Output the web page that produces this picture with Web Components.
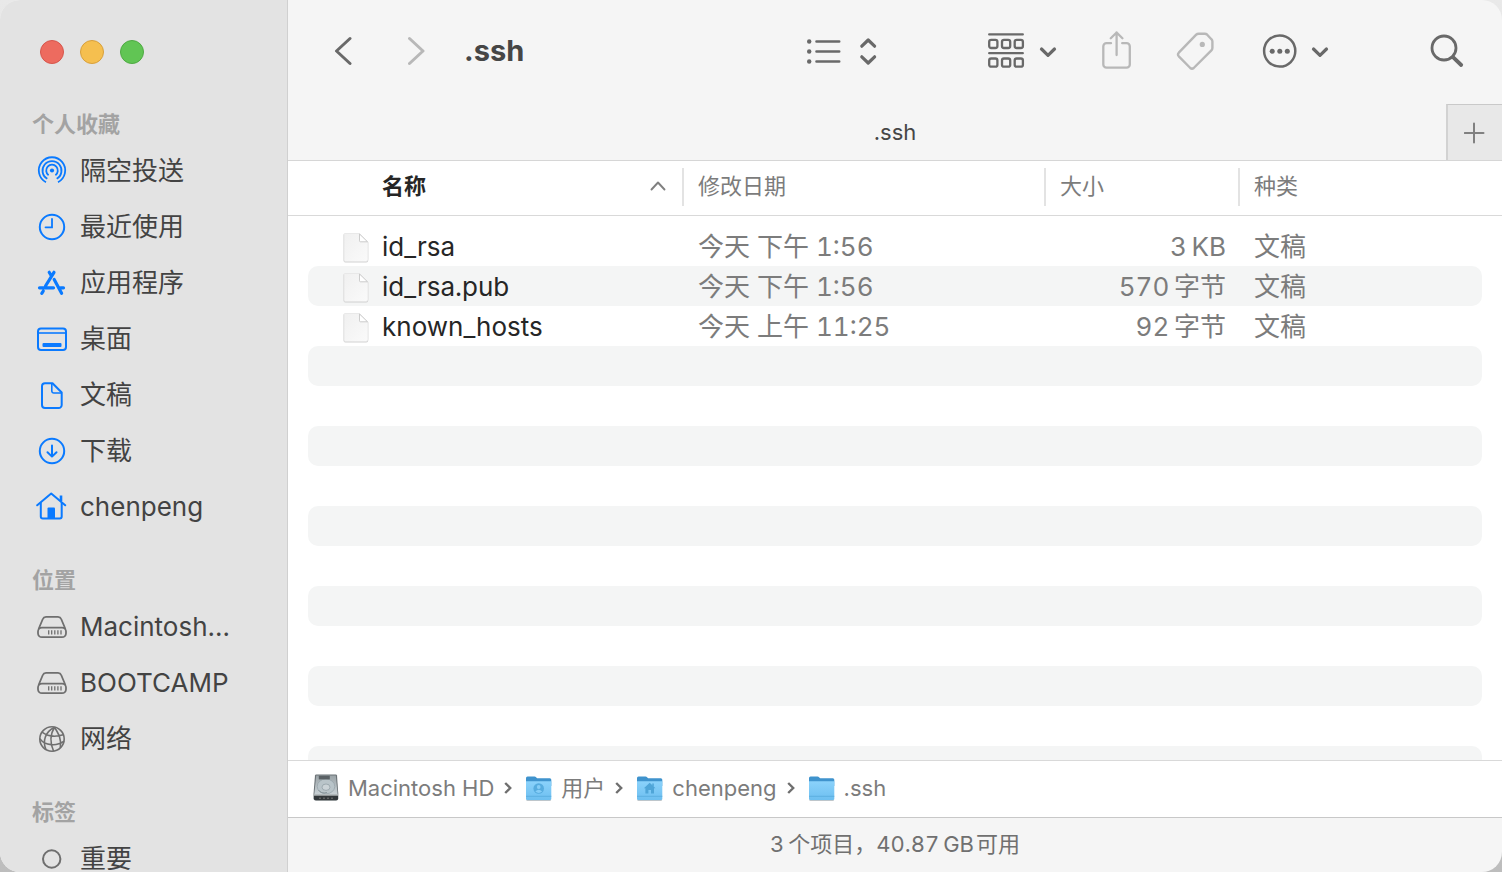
<!DOCTYPE html>
<html lang="zh-CN">
<head>
<meta charset="utf-8">
<title>.ssh</title>
<style>
  html, body { margin: 0; height: 100%; }
  body {
    background: linear-gradient(#e9e9e9, #bdbdbd);
    font-family: Inter, "Noto Sans CJK SC", sans-serif;
    color: #434343;
    overflow: hidden;
  }
</style>
</head>
<body>
<finder-window></finder-window>

<script>
const ICONS = {
  airdrop: `<svg width="32" height="32" viewBox="0 0 32 32" fill="none" stroke="currentColor" stroke-width="1.8"><circle cx="16" cy="15.500" r="2.100" fill="currentColor" stroke="none"/><path d="M12.600 20.200a5.800 5.800 0 1 1 6.800 0M11.300 23.800a9.500 9.500 0 1 1 9.400 0M10 27.200a13.200 13.200 0 1 1 12 0"/></svg>`,
  recent: `<svg width="32" height="32" viewBox="0 0 32 32" fill="none" stroke="currentColor" stroke-width="2"><circle cx="16" cy="16" r="12.200"/><path stroke-width="1.800" stroke-linecap="round" d="M16 8v8.300H9.500"/></svg>`,
  apps: `<svg width="32" height="32" viewBox="0 0 32 32" fill="none" stroke="currentColor" stroke-width="3.2" stroke-linecap="round"><path d="M3.500 20.800H17.500M24.500 20.800H27.500M18 5.300 9.500 19M7.300 24l-1.500 2.300M13.200 5.300l1.800 3M18.200 12.500l7.400 13.800"/></svg>`,
  desktop: `<svg width="32" height="32" viewBox="0 0 32 32" fill="none" stroke="currentColor" stroke-width="2"><rect x="2" y="5.500" width="28" height="21.500" rx="3"/><path d="M2 10h28" stroke-width="1.600"/><rect x="6.500" y="20" width="19" height="4" rx="1" fill="currentColor" stroke="none"/></svg>`,
  doc: `<svg width="32" height="32" viewBox="0 0 32 32" fill="none" stroke="currentColor" stroke-width="2" stroke-linejoin="round"><path d="M9 4.200h7.500l9.200 9.300v12.500a3 3 0 0 1-3 3H9a3 3 0 0 1-3-3V7.200a3 3 0 0 1 3-3Z"/><path stroke-width="1.600" d="M15.800 4.500V12a2 2 0 0 0 2 2h7.700"/></svg>`,
  download: `<svg width="32" height="32" viewBox="0 0 32 32" fill="none" stroke="currentColor" stroke-width="2" stroke-linecap="round" stroke-linejoin="round"><circle cx="16" cy="16" r="12.200"/><path d="M16 10.500v11M11.500 17.200l4.500 4.400 4.500-4.400"/></svg>`,
  home: `<svg width="32" height="32" viewBox="0 0 32 32" fill="none" stroke="currentColor" stroke-width="2" stroke-linecap="round" stroke-linejoin="round"><path d="M1.200 14.300 15.200 2.500 29.200 14.300"/><path d="M4.800 12v13.500a2 2 0 0 0 2 2h16.900a2 2 0 0 0 2-2V12"/><path d="M25 4.500v5.500" stroke-width="2.600" stroke-linecap="butt"/><path d="M11.500 27.500V17.500a1 1 0 0 1 1-1h5.500a1 1 0 0 1 1 1v10Z" fill="currentColor" stroke="none"/></svg>`,
  drive: `<svg width="32" height="32" viewBox="0 0 32 32" fill="none" stroke="currentColor" stroke-width="1.800"><rect x="2" y="16.600" width="28" height="9.600" rx="4"/><path d="M2.600 18 6.800 8Q7.600 5.900 10 5.900H22Q24.400 5.900 25.200 8L29.400 18"/><path stroke-width="1.300" d="M12.700 19.200v4.200M15.700 19.200v4.200M18.800 19.200v4.200M21.900 19.200v4.200M25 19.200v4.200"/></svg>`,
  network: `<svg width="32" height="32" viewBox="0 0 32 32" fill="none" stroke="currentColor" stroke-width="1.600"><circle cx="16" cy="16" r="12.200"/><path d="M18.500 4.200C9 9 6.500 18 9.800 26.200M18.500 4.200C13.500 12 14.500 21 17.600 28.200M18.500 4.200C22.800 11 25.800 16.500 24.300 24.800M6 9.200C12 13.600 20 14 27.300 11.800M3.800 15.600C9 22.800 20.500 23.700 28 18.200"/></svg>`,
  tagdot: `<svg width="32" height="32" viewBox="0 0 32 32" fill="none" stroke="currentColor" stroke-width="2"><circle cx="15.700" cy="16" r="8.700"/></svg>`,

  back: `<svg width="18" height="30" viewBox="0 0 18 30" fill="none" stroke="currentColor" stroke-width="3" stroke-linecap="round" stroke-linejoin="round"><path d="M16 2.500 2.500 15 16 27.500"/></svg>`,
  forward: `<svg width="18" height="30" viewBox="0 0 18 30" fill="none" stroke="currentColor" stroke-width="3" stroke-linecap="round" stroke-linejoin="round"><path d="M1.500 2.500 15 15 1.500 27.500"/></svg>`,
  view: `<svg width="72" height="30" viewBox="0 0 72 30" fill="none" stroke="currentColor" stroke-width="2.600" stroke-linecap="round" stroke-linejoin="round"><g fill="currentColor" stroke="none"><circle cx="3.200" cy="5.500" r="2.200"/><circle cx="3.200" cy="15.500" r="2.200"/><circle cx="3.200" cy="25.500" r="2.200"/></g><path d="M10.500 5.500H33.200M10.500 15.500H33.200M10.500 25.500H33.200"/><path stroke-width="3.200" d="M55.800 10.200l6.400-6.200 6.400 6.200M55.800 20.800l6.400 6.200 6.400-6.200"/></svg>`,
  group: `<svg width="70" height="36" viewBox="0 0 70 36" fill="none" stroke="currentColor" stroke-width="2.300" stroke-linecap="round" stroke-linejoin="round"><path d="M1.200 1.400H34.800M1.200 20.200H34.800"/><rect x="1.200" y="6.800" width="8.200" height="8.200" rx="2"/><rect x="14" y="6.800" width="8.200" height="8.200" rx="2"/><rect x="26.700" y="6.800" width="8.200" height="8.200" rx="2"/><rect x="1.200" y="25.500" width="8.200" height="8.200" rx="2"/><rect x="14" y="25.500" width="8.200" height="8.200" rx="2"/><rect x="26.700" y="25.500" width="8.200" height="8.200" rx="2"/><path stroke-width="3.200" d="M53.500 16 60 22.300 66.500 16"/></svg>`,
  share: `<svg width="32" height="40" viewBox="0 0 32 40" fill="none" stroke="currentColor" stroke-width="2.300" stroke-linecap="round" stroke-linejoin="round"><path d="M10 12.200H5.500a3.200 3.200 0 0 0-3.200 3.200V33.400a3.200 3.200 0 0 0 3.200 3.200H25.600a3.200 3.200 0 0 0 3.200-3.200V15.400a3.200 3.200 0 0 0-3.200-3.200H21.200"/><path d="M15.600 24V1.500M9.800 7.300l5.800-5.800 5.800 5.800"/></svg>`,
  tag: `<svg width="38" height="40" viewBox="0 0 38 40" fill="none" stroke="currentColor" stroke-width="2.400" stroke-linejoin="round"><path d="M20.200 3.700Q21.200 2.700 22.700 2.700H28.800Q30.200 2.700 31.200 3.700L35.400 8.200Q36.400 9.200 36.400 10.600V17Q36.400 18.400 35.400 19.400L17.700 37Q16 38.500 14.300 37L2.800 25.300Q1.200 23.500 2.800 21.700Z"/><circle cx="26.300" cy="13.400" r="2.600" fill="currentColor" stroke="none"/></svg>`,
  more: `<svg width="68" height="36" viewBox="0 0 68 36" fill="none" stroke="currentColor" stroke-width="2.500" stroke-linecap="round" stroke-linejoin="round"><circle cx="17.700" cy="18" r="15.600"/><g fill="currentColor" stroke="none"><circle cx="10.200" cy="18.200" r="2.500"/><circle cx="17.800" cy="18.200" r="2.500"/><circle cx="25.300" cy="18.200" r="2.500"/></g><path stroke-width="3.200" d="M51.500 16 58 22.300 64.500 16"/></svg>`,
  search: `<svg width="34" height="34" viewBox="0 0 34 34" fill="none" stroke="currentColor" stroke-linecap="round"><circle cx="14" cy="14" r="12" stroke-width="2.800"/><path d="M23 23.200 31.200 31" stroke-width="3.800"/></svg>`,
  plus: `<svg width="22" height="22" viewBox="0 0 22 22" fill="none" stroke="currentColor" stroke-width="2" stroke-linecap="round"><path d="M10 1.500V20.500M.8 11H19.500"/></svg>`,
  sort: `<svg width="16" height="10" viewBox="0 0 16 10" fill="none" stroke="currentColor" stroke-width="1.900" stroke-linecap="round" stroke-linejoin="round"><path d="M1.500 8.500 8 1.500 14.500 8.500"/></svg>`,
  crumb: `<svg width="8" height="14" viewBox="0 0 8 14" fill="none" stroke="currentColor" stroke-width="2.400"><path d="M1.200 2 6.200 7 1.200 12"/></svg>`,
  file: `<svg width="28" height="32" viewBox="0 0 28 32"><defs><linearGradient id="p" x1="0" y1="0" x2="1" y2="1"><stop offset="0" stop-color="#f0f0f0"/><stop offset="1" stop-color="#fafafa"/></linearGradient></defs><path d="M2.500 3H17.800L26.200 11.400V29.500a2 2 0 0 1-2 2H3.500a2 2 0 0 1-2-2V4a1 1 0 0 1 1-1Z" fill="#c4c4c4" opacity=".8"/><path d="M2.500 2.500H17.500L26 11V28.500a2 2 0 0 1-2 2H3.500a1.500 1.500 0 0 1-1.500-1.500V3.500a1 1 0 0 1 .5-1Z" fill="url(#p)" stroke="#e4e4e4" stroke-width=".8"/><path d="M17.500 3V9.800a1 1 0 0 0 1 1H25.500Z" fill="#fff" stroke="#c6c6c6" stroke-width=".9"/></svg>`,
  hd: `<svg width="28" height="28" viewBox="0 0 28 28"><defs><linearGradient id="m" x1="0" y1="0" x2="0" y2="1"><stop offset="0" stop-color="#9aa3a7"/><stop offset="1" stop-color="#c9d1d5"/></linearGradient></defs><path d="M3 1.500Q3.200.6 4.200.6H23.800Q24.800.6 25 1.500L26.300 20V24.500a2 2 0 0 1-2 2H3.500a2 2 0 0 1-2-2V20Z" fill="#6b7276"/><path d="M4.200 1.500H23.800L25.600 20.500H2.300Z" fill="url(#m)"/><ellipse cx="14" cy="12.400" rx="8.800" ry="7.400" fill="#b9c4c9" stroke="#98a5ab" stroke-width=".8"/><ellipse cx="14" cy="13.200" rx="4" ry="3.200" fill="#cbd3d7" stroke="#8d9aa0" stroke-width=".7"/><path d="M6.500 16Q9 20 15 18.500" fill="none" stroke="#7f8c92" stroke-width=".8"/><rect x="6.800" y="1.800" width="11" height="3.600" fill="#5a6165"/><path d="M2 20.800H26V24.400a1.800 1.800 0 0 1-1.800 1.800H3.800A1.800 1.800 0 0 1 2 24.400Z" fill="#33383b"/><path d="M2 21H26" stroke="#e7ebed"/><path d="M7 24.200H21" stroke="#777" stroke-dasharray="2 2"/></svg>`
};
const folder = mark => `<svg width="28" height="28" viewBox="0 0 28 28"><defs><linearGradient id="f" x1="0" y1="0" x2="0" y2="1"><stop offset="0" stop-color="#8bd2fb"/><stop offset="1" stop-color="#6dbff0"/></linearGradient></defs><path d="M1 4a1.500 1.500 0 0 1 1.500-1.500H9.500Q10.500 2.500 11.300 3.400T13.500 4.300H24.800A1.500 1.500 0 0 1 26.300 5.800V12H1Z" fill="#3f93cd"/><path d="M1 25.500a1.500 1.500 0 0 0 1.500 1.300H24.800a1.500 1.500 0 0 0 1.500-1.300Z" fill="#a9b4ba"/><path d="M1 7.200H26.300V24.500a1.500 1.500 0 0 1-1.500 1.500H2.500A1.500 1.500 0 0 1 1 24.500Z" fill="url(#f)"/><path d="M1 22.300H26.300" stroke="#5aaede" stroke-width=".9"/>${mark}</svg>`;
ICONS.folder = folder('');
ICONS.users = folder('<circle cx="13.700" cy="14.500" r="5.300" fill="#56acdf"/><circle cx="13.700" cy="13" r="1.900" fill="#85cdf7"/><path d="M10.300 17.500Q13.700 13.800 17.100 17.500Q13.700 20.300 10.300 17.500Z" fill="#85cdf7"/>');
ICONS.userhome = folder('<path d="M13.700 8.800 19.500 14.300H18V19.500H15V16H12.400V19.500H9.400V14.300H7.900Z" fill="#4fa5d8"/><path d="M16.300 9.500h1.500v3h-1.500z" fill="#4fa5d8"/>');

function define(name, render) {
  customElements.define(name, class extends HTMLElement {
    constructor() {
      super();
      this.attachShadow({ mode: 'open' });
    }
    connectedCallback() {
      this.shadowRoot.innerHTML = render(this);
    }
  });
}

define('finder-icon', el => `
  <style>:host { display: inline-flex; flex: none; } svg { display: block; }</style>
  ${ICONS[el.getAttribute('name')]}`);

define('sidebar-item', el => `
  <style>
    :host { display: block; }
    a { display: flex; align-items: center; gap: 12px; height: 56px; padding-left: 36px;
        color: #434343; font-size: 26px; line-height: 26px; text-decoration: none; white-space: nowrap; }
    finder-icon { color: var(--tint, #0a7aff); }
  </style>
  <a href="#"><finder-icon name="${el.getAttribute('icon')}"></finder-icon><span><slot></slot></span></a>`);

define('sidebar-section', el => `
  <style>
    :host { display: block; }
    h2 { margin: 0; padding: 26px 0 0 32px; font-size: 22px; line-height: 38px; font-weight: 700; color: #a3a3a3; }
  </style>
  <h2>${el.getAttribute('heading')}</h2>
  <slot></slot>`);

define('finder-sidebar', () => `
  <style>
    :host { display: block; overflow: hidden; background: #e3e3e3; border-right: 1px solid #d0d0d0; }
    .lights { display: flex; gap: 16px; padding: 40px 40px 15px; }
    .lights button { width: 24px; height: 24px; padding: 0; border-radius: 50%; border: 1px solid #d6564c; background: #ed6b5f; }
    .lights .min { background: #f5bf4f; border-color: #d8a03c; }
    .lights .max { background: #61c554; border-color: #4faa43; }
    .gray { --tint: #6f6f6f; }
  </style>
  <div class="lights">
    <button aria-label="关闭"></button><button class="min" aria-label="最小化"></button><button class="max" aria-label="缩放"></button>
  </div>
  <nav>
    <sidebar-section heading="个人收藏">
      <sidebar-item icon="airdrop">隔空投送</sidebar-item>
      <sidebar-item icon="recent">最近使用</sidebar-item>
      <sidebar-item icon="apps">应用程序</sidebar-item>
      <sidebar-item icon="desktop">桌面</sidebar-item>
      <sidebar-item icon="doc">文稿</sidebar-item>
      <sidebar-item icon="download">下载</sidebar-item>
      <sidebar-item icon="home">chenpeng</sidebar-item>
    </sidebar-section>
    <sidebar-section class="gray" heading="位置">
      <sidebar-item icon="drive">Macintosh...</sidebar-item>
      <sidebar-item icon="drive">BOOTCAMP</sidebar-item>
      <sidebar-item icon="network">网络</sidebar-item>
    </sidebar-section>
    <sidebar-section class="gray" heading="标签">
      <sidebar-item icon="tagdot">重要</sidebar-item>
    </sidebar-section>
  </nav>`);

define('finder-toolbar', () => `
  <style>
    :host { display: flex; align-items: center; height: 102px; padding: 0 38px 2px 46px; color: #696969; }
    button { display: flex; padding: 0; border: 0; background: none; color: inherit; }
    button:disabled { color: #b8b8b8; }
    .nav { display: flex; gap: 56px; }
    h1 { flex: 1; margin: 0 0 0 38px; font-size: 29px; line-height: 40px; font-weight: 700; color: #464646; }
    .actions { display: flex; align-items: center; gap: 43px; }
    .view { margin-right: 67px; }
    .more { margin: 0 57px 0 5px; }
  </style>
  <div class="nav">
    <button aria-label="后退"><finder-icon name="back"></finder-icon></button>
    <button aria-label="前进" disabled><finder-icon name="forward"></finder-icon></button>
  </div>
  <h1>.ssh</h1>
  <div class="actions">
    <button class="view" aria-label="显示"><finder-icon name="view"></finder-icon></button>
    <button aria-label="群组"><finder-icon name="group"></finder-icon></button>
    <button aria-label="共享" disabled><finder-icon name="share"></finder-icon></button>
    <button aria-label="标签" disabled><finder-icon name="tag"></finder-icon></button>
    <button class="more" aria-label="操作"><finder-icon name="more"></finder-icon></button>
    <button aria-label="搜索"><finder-icon name="search"></finder-icon></button>
  </div>`);

define('finder-tabs', () => `
  <style>
    :host { display: grid; grid-template-columns: 56px 1fr 56px; height: 56px; border-bottom: 1px solid #d6d6d6; }
    button { font: inherit; padding: 0; border: 0; background: none; color: #464646; }
    .tab { grid-column: 2; font-size: 22px; line-height: 28px; }
    .add { display: flex; align-items: center; justify-content: center; background: #e8e8e8; color: #808080;
           border-left: 2px solid #d2d2d2; border-top: 1px solid #c9c9c9; }
  </style>
  <button class="tab">.ssh</button>
  <button class="add" aria-label="新标签页"><finder-icon name="plus"></finder-icon></button>`);

const FILES = [
  ['id_rsa', '今天 下午 1:56', '3\u2009KB', '文稿'],
  ['id_rsa.pub', '今天 下午 1:56', '570\u2009字节', '文稿'],
  ['known_hosts', '今天 上午 11:25', '92\u2009字节', '文稿']
];

define('file-list', () => `
  <style>
    :host { display: block; flex: 1; min-height: 0; overflow: hidden; background: #fff; }
    table, thead, tbody { display: block; }
    tr { display: grid; }
    thead tr { grid-template-columns: 394px 362px 194px 1fr; padding: 7px 0 9px; border-bottom: 1px solid #d9d9d9; }
    th { display: flex; align-items: center; justify-content: space-between; box-sizing: border-box; height: 38px;
         padding: 0 16px 2px 14px; border-left: 2px solid #e3e3e3;
         font-size: 22px; line-height: 32px; font-weight: 400; color: #7c7c7c; }
    th:first-child { padding-left: 94px; padding-right: 16px; border: 0; color: #262626; font-weight: 700; }
    th finder-icon { color: #808080; }
    tbody { padding-top: 10px; }
    tbody tr { grid-template-columns: 376px 362px 194px 1fr; }
    tbody tr, .blank { height: 40px; margin: 0 20px; border-radius: 10px; }
    tbody tr:nth-child(even), .blank:nth-child(odd) { background: #f4f5f5; }
    td { padding: 0 14px; font-size: 26px; line-height: 42px; color: #7c7c7c; white-space: nowrap;
         font-variant-numeric: tabular-nums; }
    td:first-child { display: flex; align-items: center; gap: 12px; padding-left: 34px; color: #262626; }
    td:nth-child(3) { text-align: right; }
  </style>
  <table>
    <thead><tr>
      <th scope="col" aria-sort="ascending"><span>名称</span><finder-icon name="sort"></finder-icon></th>
      <th scope="col">修改日期</th><th scope="col">大小</th><th scope="col">种类</th>
    </tr></thead>
    <tbody>${FILES.map(([n, d, s, k]) => `<tr><td><finder-icon name="file"></finder-icon><span>${n}</span></td><td>${d}</td><td>${s}</td><td>${k}</td></tr>`).join('')}</tbody>
  </table>
  <div aria-hidden="true">${'<div class="blank"></div>'.repeat(40)}</div>`);

define('path-crumb', el => `
  <style>
    :host { display: flex; align-items: center; gap: 10px; color: #6f6f6f; }
    a { display: flex; align-items: center; gap: 8px; color: #7c7c7c; text-decoration: none; white-space: nowrap; }
    :host(:last-of-type) .next { display: none; }
  </style>
  <a href="#"><finder-icon name="${el.getAttribute('icon')}"></finder-icon><span><slot></slot></span></a>
  <finder-icon class="next" name="crumb"></finder-icon>`);

define('path-bar', () => `
  <style>
    :host { display: flex; align-items: center; gap: 13px; height: 54px; padding: 0 0 2px 24px; background: #fff;
            border-top: 1px solid #d9d9d9; font-size: 22px; line-height: 28px; }
  </style>
  <path-crumb icon="hd">Macintosh HD</path-crumb>
  <path-crumb icon="users">用户</path-crumb>
  <path-crumb icon="userhome">chenpeng</path-crumb>
  <path-crumb icon="folder">.ssh</path-crumb>`);

define('status-bar', () => `
  <style>
    :host { display: flex; align-items: center; justify-content: center; height: 52px; padding-bottom: 2px; border-top: 1px solid #c8c8c8;
            font-size: 22px; line-height: 28px; color: #707070; font-variant-numeric: tabular-nums; }
  </style>
  <span>3\u2009个项目，40.87\u2009GB\u200A可用</span>`);

define('finder-window', () => `
  <style>
    :host { display: grid; grid-template-columns: 288px 1fr; height: 100vh; border-radius: 20px; overflow: hidden; background: #f5f5f5; }
    finder-sidebar { box-sizing: border-box; min-height: 0; }
    main { display: flex; flex-direction: column; min-width: 0; min-height: 0; }
  </style>
  <finder-sidebar></finder-sidebar>
  <main>
    <finder-toolbar></finder-toolbar>
    <finder-tabs></finder-tabs>
    <file-list></file-list>
    <path-bar></path-bar>
    <status-bar></status-bar>
  </main>`);
</script>
</body>
</html>
